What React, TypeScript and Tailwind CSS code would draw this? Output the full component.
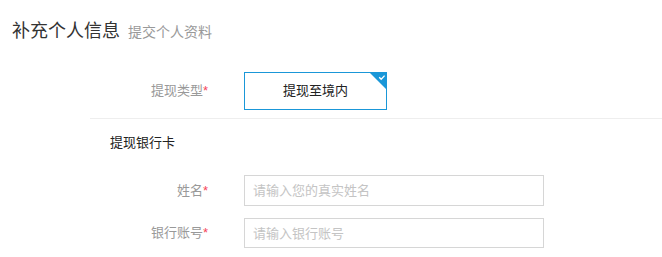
export default function App() {
  const font = { fontFamily: '"Liberation Sans", "Noto Sans CJK SC", sans-serif' };

  return (
    <div className="w-[662px] h-[257px] bg-white overflow-hidden" style={font}>
      {/* header */}
      <div className="h-[62px] flex items-center pl-[12px]">
        <div className="flex items-baseline gap-[8px]">
          <span className="text-[18px] text-[#333]">补充个人信息</span>
          <span className="text-[14px] text-[#999]">提交个人资料</span>
        </div>
      </div>

      <div className="pl-[90px]">
        {/* withdraw type */}
        <div className="flex items-center mt-[10px]">
          <label className="w-[118px] text-right text-[13px] text-[#999]">
            提现类型<span className="text-[#f5455b]">*</span>
          </label>
          <div className="relative ml-[36px] w-[143px] h-[38px] border border-[#1a97d8] flex items-center justify-center text-[13px] text-[#222]">
            提现至境内
            <svg className="absolute -top-px -right-px" width="18" height="18" viewBox="0 0 18 18">
              <polygon points="0,0 18,0 18,18" fill="#1a97d8" />
              <path d="M10.2 5.2 L12.2 7.2 L15.6 3.6" stroke="#fff" strokeWidth="1.3" fill="none" />
            </svg>
          </div>
        </div>

        <div className="mt-[8px] border-t border-[#eeeeee]" />

        <div className="h-[48px] flex items-center pl-[20px] text-[13px] text-[#222]">提现银行卡</div>

        {/* bank card fields */}
        <div className="mt-[8px] flex flex-col gap-[12px]">
          <div className="flex items-center">
            <label className="w-[118px] text-right text-[13px] text-[#999]">
              姓名<span className="text-[#f5455b]">*</span>
            </label>
            <input
              className="ml-[36px] w-[300px] h-[31px] border border-[#d6d6d6] px-[8px] text-[13px] outline-none placeholder:text-[#c4c4c4]"
              placeholder="请输入您的真实姓名"
            />
          </div>
          <div className="flex items-center">
            <label className="w-[118px] text-right text-[13px] text-[#999]">
              银行账号<span className="text-[#f5455b]">*</span>
            </label>
            <input
              className="ml-[36px] w-[300px] h-[30px] border border-[#d6d6d6] px-[8px] text-[13px] outline-none placeholder:text-[#c4c4c4]"
              placeholder="请输入银行账号"
            />
          </div>
        </div>
      </div>
    </div>
  );
}
